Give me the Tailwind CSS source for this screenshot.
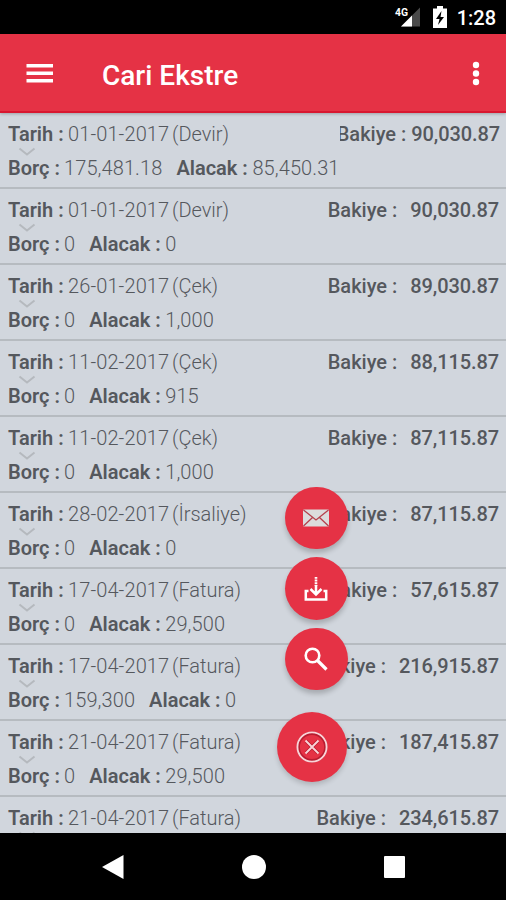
<!DOCTYPE html>
<html lang="tr">

<head>
    <meta charset="UTF-8">
    <meta name="viewport" content="width=device-width, initial-scale=1.0">
    <title>Cari Ekstre</title>
    <script src="https://cdn.jsdelivr.net/npm/@tailwindcss/browser@4"></script>
</head>

<body class="bg-black">
    <div class="relative flex flex-col w-[506px] h-[900px] overflow-hidden bg-black font-[Roboto,sans-serif]">
        <!-- status bar -->
        <div class="flex items-center justify-end h-[34px] shrink-0 pr-[10px] text-white">
            <svg class="w-[30px] h-[24px]" viewBox="0 0 30 24">
                <path d="M28 2.500v19H9z" fill="#4a4a4a" />
                <path d="M20 10.500v11H9z" fill="#fff" />
                <text x="3" y="11" font-size="11" font-weight="700" fill="#fff" stroke="#000" stroke-width="1.500" paint-order="stroke" textLength="13" lengthAdjust="spacingAndGlyphs">4G</text>
            </svg>
            <svg class="w-[14px] h-[22px] ml-[11px]" viewBox="0 0 14 22">
                <path d="M4 0h6v2.500h4V22H0V2.500h4z" fill="#fff" />
                <path d="M8.500 5L3 13h3.500L5 19l6-8H7.500z" fill="#000" />
            </svg>
            <span class="ml-[10px] mt-[2px] text-[20px] leading-6 font-medium whitespace-nowrap">1:28</span>
        </div>

        <!-- toolbar -->
        <header class="relative z-10 flex items-center h-[79px] shrink-0 bg-[#e53245] border-b-2 border-[#d81730] shadow-[0_1px_3px_rgba(0,0,0,0.25)] text-white">
            <svg class="w-[28px] h-[22px] ml-[26px]" viewBox="0 0 28 22" fill="#fff">
                <path d="M.5 2h26.500v3.500H.5zM.5 9.500h26.500v3.500H.5zM.5 17h26.500V20.500H.5z" />
            </svg>
            <h1 class="ml-[48px] mt-[6px] text-[28px] leading-8 font-medium">Cari Ekstre</h1>
            <svg class="w-[8px] h-[26px] ml-auto mr-[26px]" viewBox="0 0 8 26" fill="#fff">
                <circle cx="4" cy="5" r="3.200" />
                <circle cx="4" cy="13.500" r="3.200" />
                <circle cx="4" cy="22" r="3.200" />
            </svg>
        </header>

        <ul id="list" class="h-[720px] shrink-0 overflow-hidden bg-[#d1d6dd] text-[#55585d] text-[20px] leading-6"></ul>

        <!-- navigation bar -->
        <nav class="relative flex items-center h-[67px] shrink-0 bg-black">
            <svg class="w-[22px] h-[24px] ml-[102px]" viewBox="0 0 22 24">
                <path d="M21.500 0v24L0 12z" fill="#fff" />
            </svg>
            <div class="ml-[118px] w-[24px] h-[24px] rounded-full bg-white"></div>
            <div class="ml-[118px] w-[21px] h-[22px] rounded-[1px] bg-white"></div>
        </nav>

        <!-- floating buttons -->
        <div class="absolute left-[277px] top-[487px] z-20 flex flex-col items-end gap-2 w-[71px]">
            <button class="flex items-center justify-center w-[63px] h-[62px] rounded-full bg-[#e53245] shadow-[0_4px_5px_rgba(0,0,0,0.2)]">
                <svg class="w-[28px] h-[18px] -mt-px mr-px" viewBox="0 0 28 18">
                    <rect x="1" y=".5" width="26" height="17" rx="1" fill="#dcdcdc" />
                    <path d="M1.500 1l12.500 10L26.500 1M1.500 17l9-8.500M26.500 17l-9-8.500" fill="none" stroke="#b5404c" stroke-width="1.300" />
                </svg>
            </button>
            <button class="flex items-center justify-center w-[63px] h-[63px] rounded-full bg-[#e53245] shadow-[0_4px_5px_rgba(0,0,0,0.2)]">
                <svg class="w-[24px] h-[24px] mr-px" viewBox="0 0 24 24" fill="none" stroke="#fff">
                    <path d="M12 0v9" stroke-width="2.600" stroke-dasharray="1.800 .8" />
                    <path d="M12 8v10M6.500 12L12 17.500l5.500-5.500" stroke-width="2.500" />
                    <path d="M4.500 14H1.800v8.500h20.400V14H19.500" stroke-width="2.500" />
                </svg>
            </button>
            <button class="flex items-center justify-center w-[63px] h-[62px] rounded-full bg-[#e53245] shadow-[0_4px_5px_rgba(0,0,0,0.2)]">
                <svg class="w-[24px] h-[24px] -mt-px mr-px" viewBox="0 0 24 24" fill="none" stroke="#fff">
                    <circle cx="8.500" cy="8.500" r="6.800" stroke-width="2.600" />
                    <path d="M13.500 13.500l9 9" stroke-width="3.200" />
                </svg>
            </button>
            <button class="flex items-center justify-center w-[70px] h-[70px] mt-[14px] mr-px rounded-full bg-[#e53245] shadow-[0_3px_5px_rgba(0,0,0,0.16)]">
                <svg class="w-[34px] h-[34px]" viewBox="0 0 34 34" fill="none">
                    <g stroke="#b81c30" stroke-width="3.400">
                        <circle cx="17" cy="17" r="13.800" />
                        <path d="M11 11l12 12M23 11L11 23" />
                    </g>
                    <g stroke="#f9d4d8" stroke-width="1.900">
                        <circle cx="17" cy="17" r="14.600" />
                        <path d="M10.500 10.500l13 13M23.500 10.500l-13 13" />
                    </g>
                </svg>
            </button>
        </div>
    </div>

    <script>
        const rows = [
            ['01-01-2017', 'Devir', '175,481.18', '85,450.31', '90,030.87'],
            ['01-01-2017', 'Devir', '0', '0', '90,030.87'],
            ['26-01-2017', 'Çek', '0', '1,000', '89,030.87'],
            ['11-02-2017', 'Çek', '0', '915', '88,115.87'],
            ['11-02-2017', 'Çek', '0', '1,000', '87,115.87'],
            ['28-02-2017', 'İrsaliye', '0', '0', '87,115.87'],
            ['17-04-2017', 'Fatura', '0', '29,500', '57,615.87'],
            ['17-04-2017', 'Fatura', '159,300', '0', '216,915.87'],
            ['21-04-2017', 'Fatura', '0', '29,500', '187,415.87'],
            ['21-04-2017', 'Fatura', null, null, '234,615.87'],
        ];

        document.getElementById('list').innerHTML = rows.map(([date, type, debit, credit, balance], i) => `
            <li class="relative flex flex-col h-[76px] pl-2 pr-[7px] pt-[9px] border-b-2 border-[#b6bbc0] whitespace-nowrap">
                <div class="flex">
                    <span class="w-[60px] font-semibold">Tarih :</span>
                    <span class="w-[104px] font-light tracking-[0.1px]">${date}</span>
                    <span class="font-light">(${type})</span>
                    <span class="ml-auto font-medium ${i === 0 ? 'overflow-hidden -indent-[3px]' : ''}">Bakiye :</span>
                    <span class="font-medium tracking-[-0.1px] ${i === 0 ? 'ml-[5px] -mr-px' : 'ml-[13px]'}">${balance}</span>
                </div>
                <svg class="absolute left-[18px] top-[34px] w-[18px] h-[10px]" viewBox="0 0 18 10" fill="none">
                    <path d="M1.500 1.500L9 7.500 16.500 1.500" stroke="#b5b9be" stroke-width="2" />
                </svg>
                ${debit === null ? '' : `
                <div class="flex mt-[10px]">
                    <span class="w-[56px] font-semibold">Borç :</span>
                    <span class="font-light tracking-[0.1px]">${debit}</span>
                    <span class="w-[76px] ml-[14px] font-semibold">Alacak :</span>
                    <span class="font-light tracking-[0.1px]">${credit}</span>
                </div>`}
            </li>`).join('');
    </script>
</body>

</html>
